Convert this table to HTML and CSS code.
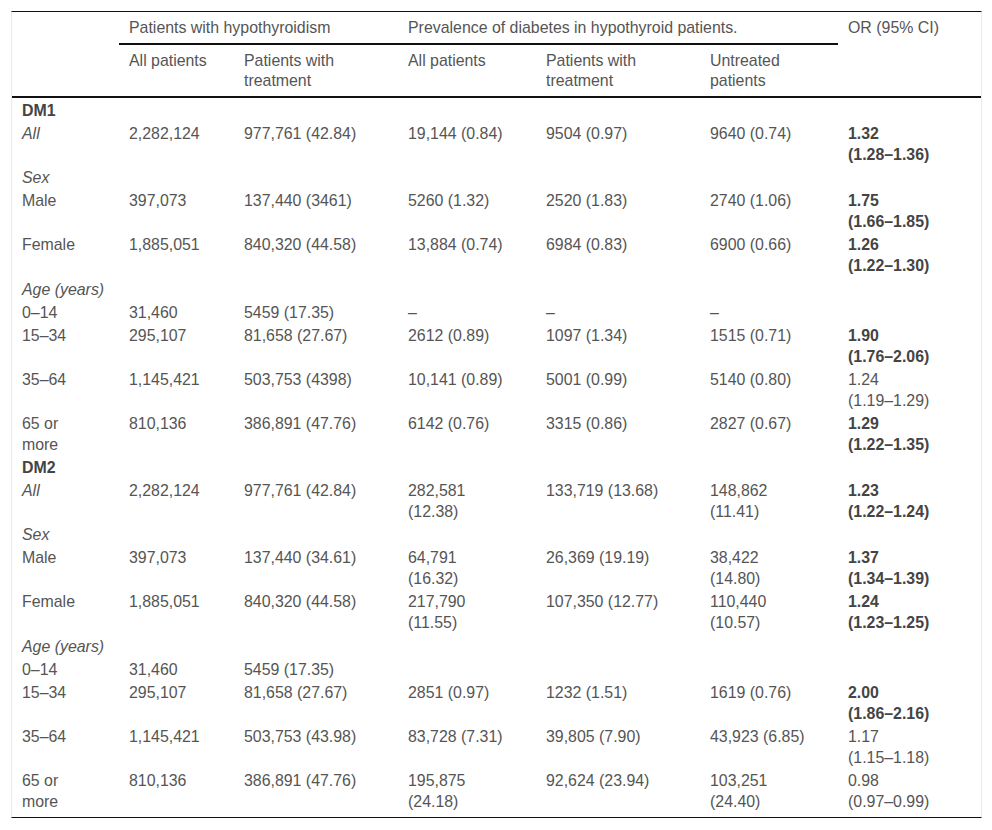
FILE: index.html
```html
<!DOCTYPE html>
<html lang="en">
<head>
<meta charset="utf-8">
<title>Hypothyroidism and diabetes</title>
<link rel="stylesheet" href="styles.css">
</head>
<body>
<div class="wrap">
<table class="data">
<colgroup>
<col class="w1"><col class="w2"><col class="w3"><col class="w4"><col class="w5"><col class="w6"><col class="w7">
</colgroup>
<thead>
<tr>
<th rowspan="2"></th>
<th colspan="2" class="group">Patients with hypothyroidism</th>
<th colspan="3" class="group">Prevalence of diabetes in hypothyroid patients.</th>
<th rowspan="2" class="or">OR (95% CI)</th>
</tr>
<tr>
<th>All patients</th>
<th>Patients with treatment</th>
<th class="narrow">All patients</th>
<th>Patients with treatment</th>
<th class="narrow">Untreated patients</th>
</tr>
</thead>
<tbody>
<tr class="sub first"><td colspan="7"><b>DM1</b></td></tr>
<tr><td><i>All</i></td><td>2,282,124</td><td>977,761 (42.84)</td><td>19,144 (0.84)</td><td>9504 (0.97)</td><td>9640 (0.74)</td><td><b>1.32 <span class="ci">(1.28–1.36)</span></b></td></tr>
<tr class="sub"><td colspan="7"><i>Sex</i></td></tr>
<tr><td>Male</td><td>397,073</td><td>137,440 (3461)</td><td>5260 (1.32)</td><td>2520 (1.83)</td><td>2740 (1.06)</td><td><b>1.75 <span class="ci">(1.66–1.85)</span></b></td></tr>
<tr><td>Female</td><td>1,885,051</td><td>840,320 (44.58)</td><td>13,884 (0.74)</td><td>6984 (0.83)</td><td>6900 (0.66)</td><td><b>1.26 <span class="ci">(1.22–1.30)</span></b></td></tr>
<tr class="sub"><td colspan="7"><i>Age (years)</i></td></tr>
<tr><td>0–14</td><td>31,460</td><td>5459 (17.35)</td><td>–</td><td>–</td><td>–</td><td></td></tr>
<tr><td>15–34</td><td>295,107</td><td>81,658 (27.67)</td><td>2612 (0.89)</td><td>1097 (1.34)</td><td>1515 (0.71)</td><td><b>1.90 <span class="ci">(1.76–2.06)</span></b></td></tr>
<tr><td>35–64</td><td>1,145,421</td><td>503,753 (4398)</td><td>10,141 (0.89)</td><td>5001 (0.99)</td><td>5140 (0.80)</td><td>1.24 <span class="ci">(1.19–1.29)</span></td></tr>
<tr><td>65 or more</td><td>810,136</td><td>386,891 (47.76)</td><td>6142 (0.76)</td><td>3315 (0.86)</td><td>2827 (0.67)</td><td><b>1.29 <span class="ci">(1.22–1.35)</span></b></td></tr>
<tr class="sub"><td colspan="7"><b>DM2</b></td></tr>
<tr><td><i>All</i></td><td>2,282,124</td><td>977,761 (42.84)</td><td>282,581 (12.38)</td><td>133,719 (13.68)</td><td>148,862 (11.41)</td><td><b>1.23 <span class="ci">(1.22–1.24)</span></b></td></tr>
<tr class="sub"><td colspan="7"><i>Sex</i></td></tr>
<tr><td>Male</td><td>397,073</td><td>137,440 (34.61)</td><td>64,791 (16.32)</td><td>26,369 (19.19)</td><td>38,422 (14.80)</td><td><b>1.37 <span class="ci">(1.34–1.39)</span></b></td></tr>
<tr><td>Female</td><td>1,885,051</td><td>840,320 (44.58)</td><td>217,790 (11.55)</td><td>107,350 (12.77)</td><td>110,440 (10.57)</td><td><b>1.24 <span class="ci">(1.23–1.25)</span></b></td></tr>
<tr class="sub"><td colspan="7"><i>Age (years)</i></td></tr>
<tr><td>0–14</td><td>31,460</td><td>5459 (17.35)</td><td></td><td></td><td></td><td></td></tr>
<tr><td>15–34</td><td>295,107</td><td>81,658 (27.67)</td><td>2851 (0.97)</td><td>1232 (1.51)</td><td>1619 (0.76)</td><td><b>2.00 <span class="ci">(1.86–2.16)</span></b></td></tr>
<tr><td>35–64</td><td>1,145,421</td><td>503,753 (43.98)</td><td>83,728 (7.31)</td><td>39,805 (7.90)</td><td>43,923 (6.85)</td><td>1.17 <span class="ci">(1.15–1.18)</span></td></tr>
<tr><td>65 or more</td><td>810,136</td><td>386,891 (47.76)</td><td>195,875 (24.18)</td><td>92,624 (23.94)</td><td>103,251 (24.40)</td><td>0.98 <span class="ci">(0.97–0.99)</span></td></tr>
</tbody>
</table>
</div>
</body>
</html>
```
FILE: styles.css
```css
html, body {
  margin: 0;
  padding: 0;
  background: #fff;
}

body {
  font-family: "Liberation Sans", Arial, sans-serif;
  font-size: 15.9px;
  line-height: 21.06px;
  color: #555;
}

.wrap {
  margin: 11px 10px 0 11px;
  padding-bottom: 4px;
  border-top: 1px solid #111;
  border-bottom: 1px solid #111;
  border-left: 1px solid #ebebeb;
  border-right: 1px solid #ebebeb;
}

.data {
  width: 100%;
  border-collapse: collapse;
  table-layout: fixed;
}

.w1 { width: 107px; }
.w2 { width: 115px; }
.w3 { width: 164px; }
.w4 { width: 138px; }
.w5 { width: 164px; }
.w6 { width: 138px; }
.w7 { width: 143px; }

.data th {
  font-weight: normal;
  text-align: left;
  vertical-align: top;
  line-height: 20px;
  padding: 6px 10px 5px 10px;
}

.data th.group {
  border-bottom: 2px solid #111;
}

.data th.narrow {
  padding-right: 26px;
}

.data thead {
  border-bottom: 2px solid #111;
}

.data td {
  text-align: left;
  vertical-align: top;
  padding: 1px 10px 1px 10px;
}

.data td:nth-child(1) { padding-right: 32px; }
.data td:nth-child(4) { padding-right: 26px; }
.data td:nth-child(6) { padding-right: 26px; }
.data td:nth-child(7) { padding-right: 30px; }

.data tr.sub td { padding-right: 10px; }

.data tr.first td { padding-top: 2px; }

.ci {
  white-space: nowrap;
}

.data b {
  font-weight: bold;
  color: #444;
}

.data i {
  font-style: italic;
}
```
